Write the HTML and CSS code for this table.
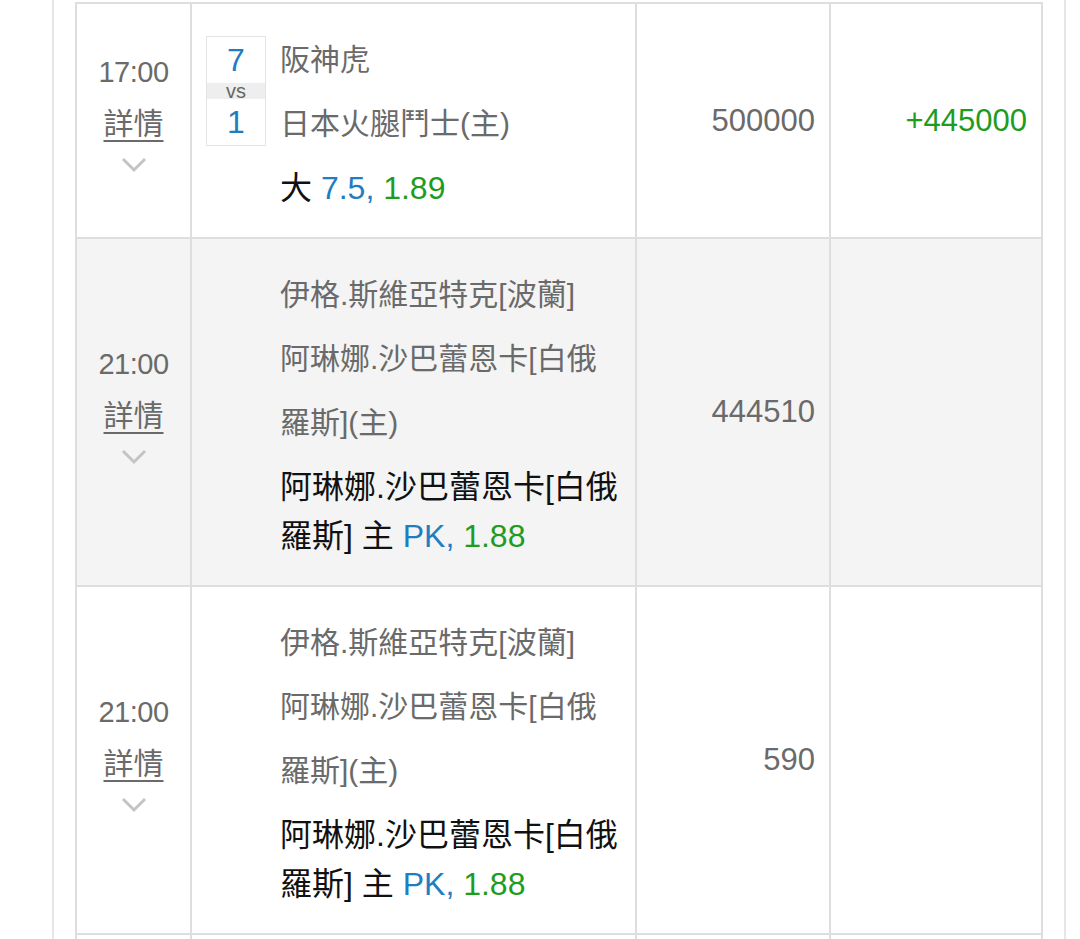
FILE: index.html
```html
<!DOCTYPE html>
<html lang="zh-Hant">
<head>
<meta charset="utf-8">
<title>注單</title>
<link rel="stylesheet" href="styles.css">
</head>
<body>
<div class="frame">
  <div class="grid">
    <div class="row">
      <div class="cell c-time">
        <div class="time">17:00</div>
        <a class="detail" href="#">詳情</a>
        <svg class="chev" width="26" height="18" viewBox="0 0 26 18"><polyline points="2,3 13,14 24,3" fill="none" stroke="#c4c4c4" stroke-width="3"/></svg>
      </div>
      <div class="cell c-match">
        <div class="score">
          <div class="num">7</div>
          <div class="vs">vs</div>
          <div class="num">1</div>
        </div>
        <div class="info">
          <div class="team">阪神虎</div>
          <div class="team">日本火腿鬥士(主)</div>
          <div class="bet"><span>大</span> <span class="blue">7.5,</span> <span class="green">1.89</span></div>
        </div>
      </div>
      <div class="cell c-amt">500000</div>
      <div class="cell c-win green">+445000</div>
    </div>

    <div class="row alt">
      <div class="cell c-time">
        <div class="time">21:00</div>
        <a class="detail" href="#">詳情</a>
        <svg class="chev" width="26" height="18" viewBox="0 0 26 18"><polyline points="2,3 13,14 24,3" fill="none" stroke="#c4c4c4" stroke-width="3"/></svg>
      </div>
      <div class="cell c-match">
        <div class="spacer"></div>
        <div class="info">
          <div class="team">伊格.斯維亞特克[波蘭]</div>
          <div class="team">阿琳娜.沙巴蕾恩卡[白俄羅斯](主)</div>
          <div class="bet">阿琳娜.沙巴蕾恩卡[白俄羅斯] 主 <span class="blue">PK,</span> <span class="green">1.88</span></div>
        </div>
      </div>
      <div class="cell c-amt">444510</div>
      <div class="cell c-win"></div>
    </div>

    <div class="row">
      <div class="cell c-time">
        <div class="time">21:00</div>
        <a class="detail" href="#">詳情</a>
        <svg class="chev" width="26" height="18" viewBox="0 0 26 18"><polyline points="2,3 13,14 24,3" fill="none" stroke="#c4c4c4" stroke-width="3"/></svg>
      </div>
      <div class="cell c-match">
        <div class="spacer"></div>
        <div class="info">
          <div class="team">伊格.斯維亞特克[波蘭]</div>
          <div class="team">阿琳娜.沙巴蕾恩卡[白俄羅斯](主)</div>
          <div class="bet">阿琳娜.沙巴蕾恩卡[白俄羅斯] 主 <span class="blue">PK,</span> <span class="green">1.88</span></div>
        </div>
      </div>
      <div class="cell c-amt">590</div>
      <div class="cell c-win"></div>
    </div>

    <div class="row">
      <div class="cell empty"></div>
      <div class="cell empty"></div>
      <div class="cell empty"></div>
      <div class="cell empty"></div>
    </div>
  </div>
</div>
</body>
</html>
```

FILE: styles.css
```css
html, body {
  margin: 0;
  padding: 0;
  background: #ffffff;
}

body {
  font-family: "Liberation Sans", "Noto Sans CJK TC", sans-serif;
  color: #6a6a6a;
  overflow: hidden;
}

.frame {
  box-sizing: border-box;
  margin-left: 52px;
  width: 1014px;
  height: 939px;
  border-left: 2px solid #e6e6e6;
  border-right: 2px solid #e6e6e6;
  padding: 2px 0 0 21px;
  overflow: hidden;
}

.grid {
  display: grid;
  grid-template-columns: 115px 445px 194px 212px;
  width: 968px;
  box-sizing: border-box;
  border-left: 2px solid #dedede;
  border-top: 2px solid #dedede;
}

.row {
  display: contents;
}

.cell {
  box-sizing: border-box;
  border-right: 2px solid #dedede;
  border-bottom: 2px solid #dedede;
  background: #ffffff;
}

.row.alt > .cell {
  background: #f4f4f4;
}

.empty {
  height: 120px;
}

/* time column */
.c-time {
  display: flex;
  flex-direction: column;
  align-items: center;
  justify-content: center;
}

.time {
  font-size: 29px;
  line-height: 40px;
  letter-spacing: -0.5px;
  color: #6a6a6a;
}

.detail {
  font-size: 30px;
  line-height: 64px;
  color: #6a6a6a;
  text-decoration: underline;
  text-decoration-thickness: 2px;
  text-underline-offset: 6px;
}

.chev {
  display: block;
  margin-bottom: 15px;
}

/* match column */
.c-match {
  display: flex;
  gap: 14px;
  padding: 24px 15px 24px 14px;
}

.spacer {
  flex: 0 0 60px;
}

.score {
  flex: 0 0 60px;
  box-sizing: border-box;
  width: 60px;
  height: 110px;
  margin-top: 8px;
  border: 1px solid #e4e4e4;
  background: #ffffff;
  text-align: center;
}

.num {
  font-size: 32px;
  line-height: 46px;
  color: #1f7dc2;
}

.vs {
  height: 16px;
  font-size: 20px;
  line-height: 16px;
  background: #eeeeee;
  color: #666666;
}

.info {
  flex: 1 1 auto;
  min-width: 0;
}

.team {
  font-size: 30px;
  line-height: 64px;
  color: #6a6a6a;
}

.bet {
  margin-top: 8px;
  font-size: 32px;
  line-height: 49px;
  color: #111111;
}

.blue {
  color: #1f7dc2;
}

.green {
  color: #1e9c1e;
}

/* amount columns */
.c-amt,
.c-win {
  display: flex;
  align-items: center;
  justify-content: flex-end;
  padding-right: 14px;
  font-size: 31px;
}

.c-amt {
  color: #6a6a6a;
}
```
